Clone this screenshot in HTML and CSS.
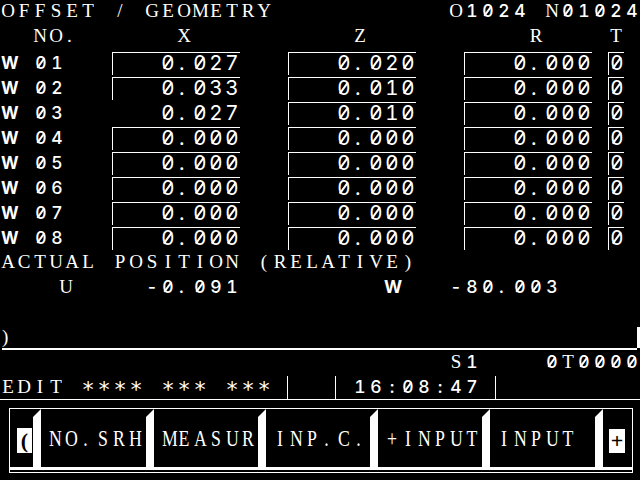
FILE: index.html
```html
<!DOCTYPE html>
<html lang="en">

<head>
    <meta charset="UTF-8">
    <meta name="viewport" content="width=device-width, initial-scale=1.0">
    <title>Offset / Geometry</title>
    <link rel="stylesheet" href="styles.css">
</head>

<body>
    <div class="screen">
        <div class="line cells">OFFSET / GEOMETRY           O<span class="num">1024</span> N<span class="num">01024</span></div>
        <div class="line cells">  NO.      X          Z          R    T</div>

        <!-- offset table -->
        <div class="table">
            <div class="row"><span class="w cells">W</span><span class="no cells">01</span><span class="cell cells">0.027</span><span class="cell z cells">0.020</span><span class="cell r cells">0.000</span><span class="cell t cells">0</span></div>
            <div class="row"><span class="w cells">W</span><span class="no cells">02</span><span class="cell cells">0.033</span><span class="cell z cells">0.010</span><span class="cell r cells">0.000</span><span class="cell t cells">0</span></div>
            <div class="row"><span class="w cells">W</span><span class="no cells">03</span><span class="cell plain cells">0.027</span><span class="cell z cells">0.010</span><span class="cell r cells">0.000</span><span class="cell t cells">0</span></div>
            <div class="row"><span class="w cells">W</span><span class="no cells">04</span><span class="cell cells">0.000</span><span class="cell z cells">0.000</span><span class="cell r cells">0.000</span><span class="cell t cells">0</span></div>
            <div class="row"><span class="w cells">W</span><span class="no cells">05</span><span class="cell cells">0.000</span><span class="cell z cells">0.000</span><span class="cell r cells">0.000</span><span class="cell t cells">0</span></div>
            <div class="row"><span class="w cells">W</span><span class="no cells">06</span><span class="cell cells">0.000</span><span class="cell z cells">0.000</span><span class="cell r cells">0.000</span><span class="cell t cells">0</span></div>
            <div class="row"><span class="w cells">W</span><span class="no cells">07</span><span class="cell cells">0.000</span><span class="cell z cells">0.000</span><span class="cell r cells">0.000</span><span class="cell t cells">0</span></div>
            <div class="row"><span class="w cells">W</span><span class="no cells">08</span><span class="cell cells">0.000</span><span class="cell z cells">0.000</span><span class="cell r cells">0.000</span><span class="cell t cells">0</span></div>
        </div>

        <div class="line actual cells">ACTUAL POSITION (RELATIVE)</div>
        <div class="line cells">    <span class="axis">U</span>    <span class="num">-0.091</span>         <span class="num bold">W</span>   <span class="num">-80.003</span></div>
        <div class="line"></div>

        <!-- input buffer -->
        <div class="prompt"><span>)</span><span class="cursor"></span></div>
        <div class="rule"></div>

        <div class="line spindle cells">                            S<span class="num">1</span>    <span class="num">0</span>T<span class="num">0000</span></div>

        <div class="status">
            <div class="seg mode cells">EDIT <span class="stars">**** *** ***</span></div>
            <div class="seg alarm"></div>
            <div class="seg clock cells"> <span class="num">16:08:47</span></div>
            <div class="seg"></div>
        </div>

        <!-- soft keys -->
        <div class="softkeys">
            <div class="key first"><span class="tag">(</span></div>
            <div class="key wide"><span class="label cells">NO.SRH</span></div>
            <div class="key"><span class="label cells">MEASUR</span></div>
            <div class="key"><span class="label cells">INP.C.</span></div>
            <div class="key"><span class="label cells">+INPUT</span></div>
            <div class="key wide"><span class="label cells">INPUT</span></div>
            <div class="key last"><span class="tag">+</span></div>
        </div>
    </div>

    <script>
        // the CNC screen is a character grid: put every character in its own 16px cell
        document.querySelectorAll('.cells').forEach(el => {
            const walker = document.createTreeWalker(el, NodeFilter.SHOW_TEXT);
            const nodes = [];
            while (walker.nextNode()) nodes.push(walker.currentNode);

            nodes.forEach(node => {
                const frag = document.createDocumentFragment();
                for (const ch of node.data) {
                    const c = document.createElement('span');
                    c.className = 'c';
                    if (ch === '.') c.className += ' pt';
                    if (ch === '0') c.className += ' zero';
                    c.textContent = ch;
                    frag.appendChild(c);
                }
                node.replaceWith(frag);
            });
        });
    </script>
</body>

</html>
```

FILE: styles.css
```css
body {
    margin: 0;
    background: #000;
}

.screen {
    width: 640px;
    height: 480px;
    overflow: hidden;
    background: #000;
    color: #fff;
    font-family: "Liberation Serif", serif;
    font-size: 19px;
}

/* one character cell */
.c {
    display: inline-block;
    width: 16px;
    text-align: center;
    white-space: pre;
}

.c.pt {
    padding-left: 3px;
    box-sizing: border-box;
    text-align: left;
}

/* slashed zero of the CNC font */
.c.zero {
    position: relative;
}

.c.zero::after {
    content: "";
    position: absolute;
    left: 50%;
    top: calc(var(--zc) - 0.33em);
    width: 0.09em;
    height: 0.66em;
    margin-left: -0.045em;
    background: currentColor;
    transform: rotate(36deg);
}

.line {
    --zc: 11px;
    height: 25px;
    line-height: 22px;
    white-space: pre;
}

/* digits: sans face */
.num {
    font-family: Inter, sans-serif;
    font-size: 17.5px;
    font-weight: 500;
    font-variant-numeric: tabular-nums;
}

.bold {
    font-weight: 700;
}

.axis {
    margin-left: -6px;
    margin-right: 6px;
}

/* table */
.row {
    display: flex;
    height: 25px;
    padding-top: 2px;
    box-sizing: border-box;
}

.row > span {
    --zc: 10px;
    height: 23px;
    box-sizing: border-box;
    border-top: 1px solid transparent;
    border-left: 1px solid transparent;
    font-family: Inter, sans-serif;
    font-size: 20.5px;
    line-height: 20px;
    font-variant-numeric: tabular-nums;
}

.row > .w {
    width: 32px;
    font-size: 17px;
    font-weight: 700;
}

.row > .no {
    width: 80px;
    font-size: 17.5px;
    font-weight: 500;
}

.row > .cell {
    width: 128px;
    padding-left: 47px;
    border-top-color: #fff;
    border-left-color: #fff;
}

.row > .z,
.row > .r {
    margin-left: 48px;
}

.row > .t {
    width: 16px;
    margin-left: 16px;
    padding-left: 0;
}

.row > .plain {
    border-color: transparent;
}

.actual {
    margin-top: 1px;
}

/* input line */
.prompt {
    display: flex;
    justify-content: space-between;
    height: 22px;
    padding-left: 2px;
    line-height: 22px;
}

.cursor {
    width: 3px;
    height: 21px;
    margin-top: 1px;
    background: #fff;
}

.rule {
    height: 2px;
    margin: 0 3px 0 2px;
    background: #fff;
}

.spindle {
    margin-top: 1px;
}

/* status bar */
.status {
    display: flex;
    height: 23px;
    border-bottom: 1px solid #fff;
}

.seg {
    --zc: 11px;
    line-height: 22px;
    white-space: pre;
}

.stars {
    font-family: "DejaVu Sans Mono", monospace;
    font-size: 22px;
    vertical-align: -4px;
}

.mode {
    width: 287px;
    border-right: 1px solid #fff;
}

.alarm {
    width: 47px;
    border-right: 1px solid #fff;
}

.clock {
    width: 159px;
    border-right: 1px solid #fff;
}

/* soft keys */
.softkeys {
    display: flex;
    width: 624px;
    height: 65px;
    margin: 8px 0 0 9px;
    padding-bottom: 2px;
    border: 1px solid #fff;
    box-sizing: border-box;
}

.key {
    display: flex;
    flex: none;
    width: 112px;
    height: 61px;
    border-bottom: 3px solid #fff;
    box-sizing: border-box;
}

.key::before {
    content: "";
    flex: none;
    width: 8px;
    background: #fff;
    clip-path: polygon(0 8px, 100% 0, 100% 100%, 0 100%);
}

.key.wide {
    width: 113px;
}

.key.first {
    width: 23px;
}

.key.first::before {
    content: none;
}

.key.last {
    width: 37px;
}

.label {
    padding-left: 6px;
    font-size: 24px;
    line-height: 58px;
    white-space: pre;
}

/* the key font is narrower than Times */
.label .c {
    transform: scaleX(0.74);
}

.tag {
    width: 15px;
    height: 25px;
    margin: 19px 0 0 7px;
    background: #fff;
    color: #000;
    text-align: center;
    font-size: 22px;
    font-weight: bold;
    line-height: 25px;
}

.key.last .tag {
    width: 16px;
    height: 24px;
    margin: 20px 0 0 6px;
    line-height: 24px;
}
```
